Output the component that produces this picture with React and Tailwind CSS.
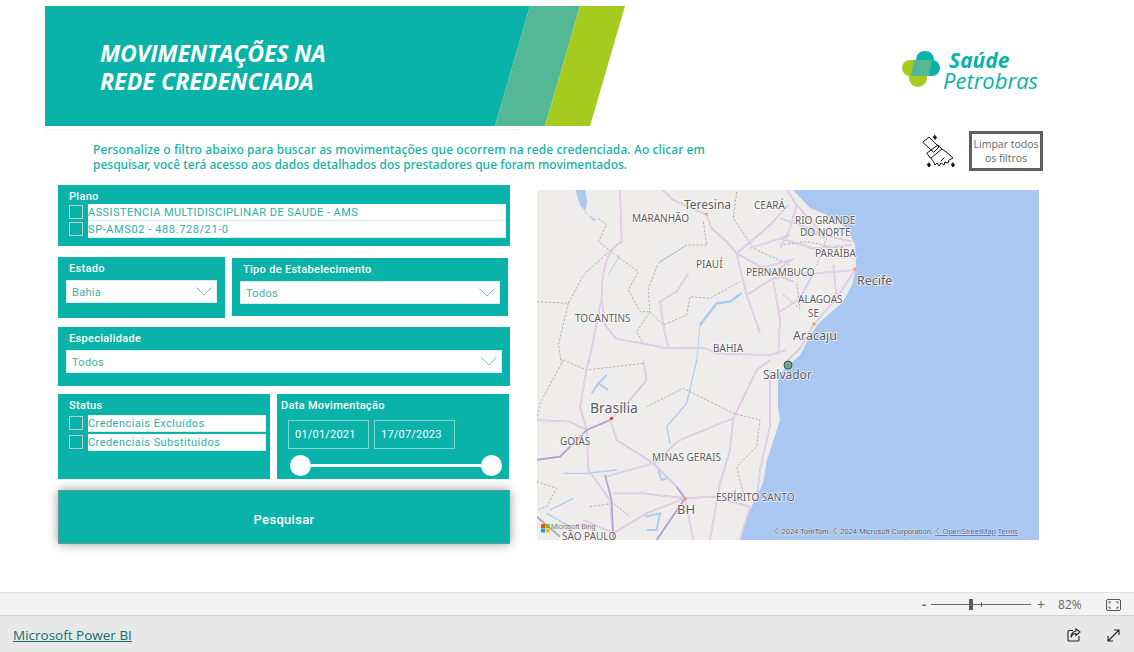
import React from "react";

const din = "font-['Roboto',sans-serif]";

const roads = {
  // coords read off 3x crops, each group keeps its own origin
  a: [
    "M270,12 L275,170 Q215,200 215,340 L225,420 L260,462 L340,475 L410,490 L520,488 L560,505 L720,510 L770,495",
    "M215,340 L175,540",
    "M395,12 L430,45 L530,90 L545,130 L590,170 L620,205 L650,330 L690,445",
    "M620,205 L720,120 L775,60",
    "M620,205 L700,250 L790,290",
    "M650,330 L730,280 L790,270",
    "M475,265 L440,320 L390,350 L400,420 L415,490",
    "M730,290 L750,400 L745,510",
    "M660,190 L780,150",
    "M690,250 L780,225",
  ],
  b: [
    "M20,180 L120,185 L170,210 L240,180 L260,240 L370,310 L440,380 L465,415 L490,540",
    "M175,0 L150,140 L170,210 L175,330 L240,420 L250,540",
    "M340,0 L350,60 L300,120 L240,180",
    "M20,300 L90,290 L170,210",
    "M230,350 L370,310 L450,240 L610,175 L680,30 L720,0",
    "M610,175 L600,270 L570,370 L540,540",
    "M250,400 L340,400 L465,415 L550,410 L660,440 L630,540",
    "M720,30 L720,200 L690,330 L680,420",
    "M465,415 L380,540",
    "M20,470 L90,530",
    "M160,480 L250,520 L350,460 L465,415",
  ],
  c: [
    "M20,15 L50,60 L30,130 L0,190",
    "M50,60 L130,150 L215,170",
    "M0,270 L110,265 L225,255",
    "M225,255 L170,340 L100,420 L60,490 L20,530",
    "M160,240 L170,340",
    "M40,220 L0,250",
    "M0,100 L60,120 L130,150",
    "M0,160 L100,190 L215,180",
    "M100,265 L60,340 L0,380",
  ],
};

const majors = [
  "M225,345 L245,420 L250,540",
  "M440,380 L465,415 L380,540",
  "M20,300 L90,290 L170,210 L240,180",
  "M20,470 L90,530",
];

const borders = {
  a: [
    "M20,350 L115,355 L160,270 L270,170",
    "M115,355 L85,480 L95,540",
    "M205,100 L230,120 L205,170 L270,220 L325,260 L295,315 L330,380 L360,380 L320,440 L340,475",
    "M530,180 L470,180 L385,235 L355,310 L360,380 L400,420 L470,390 L480,335 L540,340 L630,290",
    "M620,20 L610,100 L670,190 L780,240",
    "M520,110 L530,180",
  ],
  b: [
    "M100,0 L30,130 L20,180",
    "M100,0 L170,30 L340,10",
    "M350,140 L460,85 L610,160 L690,180 L680,260 L620,320 L640,400",
    "M20,365 L80,385 L50,440 L20,450",
    "M180,440 L250,430 L300,470",
  ],
  c: ["M0,180 L80,170 L180,190", "M10,330 L60,370 L50,290", "M60,130 L140,160 L110,240"],
};

function MapLabel({ x, y, size = 10, children, color = "#5f5a5e" }) {
  return (
    <text x={x} y={y} fontSize={size} fill={color} stroke="#ffffff" strokeWidth="1.5" strokeOpacity="0.8" paintOrder="stroke" fontFamily="'Noto Sans', sans-serif">
      {children}
    </text>
  );
}

function RoadSet({ list }) {
  return (
    <>
      {list.map((d) => (
        <path key={d} d={d} fill="none" stroke="#cdb9dc" strokeWidth="5" strokeLinejoin="round" />
      ))}
      {list.map((d) => (
        <path key={d + "i"} d={d} fill="none" stroke="#f1e9f3" strokeWidth="2" strokeLinejoin="round" />
      ))}
    </>
  );
}

function BorderSet({ list }) {
  return list.map((d) => <path key={d} d={d} fill="none" stroke="#a3a3a3" strokeWidth="2.5" strokeDasharray="7 5" />);
}

function MapView() {
  return (
    <svg viewBox="537 190 502 350" className="w-[502px] h-[350px] block bg-[#a9c7f1]">
      <path
        d="M537,190 L793,190 L810,208 L827,215 L847,228 L855,245 L856,268 L852,285 L843,302 L830,313 L817,325 L807,342 L800,355 L785,368 L778,377 L778,407 L780,420 L767,460 L763,483 L750,510 L743,527 L740,540 L537,540 Z"
        fill="#eeedeb"
      />
      <g transform="translate(530 185) scale(0.3333)">
        <path d="M135,12 L165,12 L172,50 L165,85 L200,105 L190,108 L150,60 Z" fill="#a9c9f0" />
        <path d="M270,210 L235,270 M510,420 L500,530 M470,180 L390,230" fill="none" stroke="#b5cfee" strokeWidth="3" />
        <path d="M635,325 L600,350 L560,355 L510,420" fill="none" stroke="#a9c9f0" strokeWidth="7" />
        <BorderSet list={borders.a} />
        <RoadSet list={roads.a} />
      </g>
      <g transform="translate(530 360) scale(0.3333)">
        <path d="M500,0 L470,130 L410,200 L420,250 M100,340 L170,340 L260,330 M60,450 L130,415 M50,460 L120,500" fill="none" stroke="#b0ccef" strokeWidth="4" />
        <path d="M185,100 L205,70 L230,45 M205,70 L235,90 M385,330 L395,360 L410,355 M345,470 L390,460 L380,510 L350,510" fill="none" stroke="#b0ccef" strokeWidth="6" />
        <BorderSet list={borders.b} />
        <RoadSet list={roads.b} />
        {majors.map((d) => (
          <path key={d} d={d} fill="none" stroke="#b7a1cd" strokeWidth="5" strokeLinejoin="round" />
        ))}
      </g>
      <g transform="translate(780 185) scale(0.3333)">
        <BorderSet list={borders.c} />
        <RoadSet list={roads.c} />
      </g>
      <circle cx="706.5" cy="214" r="1.5" fill="#f0a060" />
      <circle cx="855" cy="269" r="1.7" fill="#f0a060" />
      <circle cx="814" cy="324" r="1.7" fill="#f0a060" />
      <circle cx="611.5" cy="418.5" r="1.7" fill="#d8402c" />
      <circle cx="685.5" cy="499" r="1.7" fill="#f0a060" />
      <MapLabel x={684} y={209} size={12}>Teresina</MapLabel>
      <MapLabel x={754} y={209}>CEARÁ</MapLabel>
      <MapLabel x={632} y={222}>MARANHÃO</MapLabel>
      <MapLabel x={696} y={268}>PIAUÍ</MapLabel>
      <MapLabel x={746} y={276}>PERNAMBUCO</MapLabel>
      <MapLabel x={795} y={224}>RIO GRANDE</MapLabel>
      <MapLabel x={800} y={236}>DO NORTE</MapLabel>
      <MapLabel x={815} y={257}>PARAÍBA</MapLabel>
      <MapLabel x={857} y={285} size={12.5}>Recife</MapLabel>
      <MapLabel x={798} y={303}>ALAGOAS</MapLabel>
      <MapLabel x={808} y={317}>SE</MapLabel>
      <MapLabel x={793} y={340} size={12.5}>Aracaju</MapLabel>
      <MapLabel x={713} y={352}>BAHIA</MapLabel>
      <MapLabel x={575} y={322}>TOCANTINS</MapLabel>
      <MapLabel x={763} y={379} size={12}>Salvador</MapLabel>
      <MapLabel x={590} y={413} size={14}>Brasília</MapLabel>
      <MapLabel x={560} y={445}>GOIÁS</MapLabel>
      <MapLabel x={652} y={461}>MINAS GERAIS</MapLabel>
      <MapLabel x={716} y={501}>ESPÍRITO SANTO</MapLabel>
      <MapLabel x={677} y={514} size={13}>BH</MapLabel>
      <MapLabel x={562} y={540}>SÃO PAULO</MapLabel>
      <circle cx="788" cy="365" r="4" fill="#7aa583" stroke="#2f5f55" strokeWidth="1" />
      <rect x="541" y="524" width="4" height="4" fill="#f25022" />
      <rect x="545.5" y="524" width="4" height="4" fill="#7fba00" />
      <rect x="541" y="528.5" width="4" height="4" fill="#00a4ef" />
      <rect x="545.5" y="528.5" width="4" height="4" fill="#ffb900" />
      <text x="551" y="529" fontSize="7" fill="#777" fontFamily="'Liberation Sans', sans-serif">Microsoft Bing</text>
      <text x="774" y="534" fontSize="7.5" fill="#555" stroke="#ffffff" strokeWidth="1" strokeOpacity="0.5" paintOrder="stroke" fontFamily="'Liberation Sans', sans-serif">
        © 2024 TomTom, © 2024 Microsoft Corporation, <tspan fill="#4a5f9a" textDecoration="underline">© OpenStreetMap</tspan>{"  "}<tspan fill="#4a5f9a" textDecoration="underline">Terms</tspan>
      </text>
    </svg>
  );
}

function Chevron() {
  return (
    <svg width="16" height="9" viewBox="0 0 16 9" className="shrink-0">
      <path d="M0.5,0.5 L8,8 L15.5,0.5" fill="none" stroke="#74c9c3" strokeWidth="1" />
    </svg>
  );
}

function Dropdown({ value }) {
  return (
    <div className="h-[23px] bg-white flex items-center justify-between pl-[5px] pr-[4px] text-[11px] tracking-[0.3px] text-[#3fb0a6] border border-[#d8efed]">
      <span className="pt-[3px]">{value}</span>
      <Chevron />
    </div>
  );
}

function CheckRow({ label, spacing = "tracking-[0.45px]" }) {
  return (
    <div className="flex items-start">
      <span className="w-[14px] h-[14px] mt-px border border-[#b9cfcd] shrink-0 mr-[5px]" />
      <span className={`flex-1 bg-white text-[11px] text-[#2bb0a6] h-[17px] leading-[18px] border-b border-[#d5eeec] ${spacing}`}>{label}</span>
    </div>
  );
}

function PanelTitle({ children, className = "" }) {
  return <div className={`text-[11px] font-medium tracking-[0.3px] text-white leading-[13px] ${className}`}>{children}</div>;
}

function BroomIcon() {
  return (
    <svg width="34" height="33" viewBox="0 0 34 33" fill="none" stroke="#111" strokeWidth="1" strokeLinejoin="round" strokeLinecap="round">
      <path d="M1,7 L7,2 L17,12 L12,17 Z" />
      <path d="M5,18 L16,10 L20,14 L9,23 Z" />
      <path d="M9,23 Q12,27 13,30 L15,28 L17,31 L19,28 L22,30 L23,27 L26,28 L27,25 L31,23 Q25,17 20,14" />
      <path d="M19,26 L22,23" />
      <path d="M13,0.5 L14.5,2.5 L13,4.5 L11.5,2.5 Z" fill="#111" />
      <path d="M7,28 L8.5,30 L7,32 L5.5,30 Z" fill="#111" />
      <path d="M31,28 L32.5,30 L31,32 L29.5,30 Z" fill="#111" />
    </svg>
  );
}

function Logo() {
  return (
    <div className="flex items-start mt-[44px] ml-[277px]">
      <svg width="40" height="36" viewBox="0 0 40 36" className="mt-[1px]">
        <rect x="0" y="9" width="28" height="16" rx="8" fill="#a6cb1f" />
        <rect x="7" y="12" width="18" height="24" rx="9" fill="#a6cb1f" />
        <rect x="14" y="0" width="18" height="25" rx="8.5" fill="#0ab3a9" />
        <rect x="15" y="9" width="23" height="16" rx="8" fill="#0ab3a9" />
        <path d="M12,9 L30,9 L27,25 L9,25 Z" fill="#54b795" />
      </svg>
      <div className="ml-[1px] text-[#0ab3a9] font-['Open_Sans',sans-serif] italic">
        <div className="text-[21px] font-bold leading-[20px] ml-[6px]">Saúde</div>
        <div className="text-[22px] leading-[23px] -mt-[1px]">Petrobras</div>
      </div>
    </div>
  );
}

export default function App() {
  return (
    <div className={`h-[652px] w-[1134px] overflow-hidden flex flex-col bg-white ${din}`}>
      <main className="h-[592px] shrink-0">
        <div className="flex pt-[6px] pl-[45px]">
          <div className="relative w-[580px] h-[120px] shrink-0">
            <svg viewBox="0 0 580 120" className="absolute inset-0 w-full h-full">
              <polygon points="0,0 485,0 450,120 0,120" fill="#0ab3a9" />
              <polygon points="485,0 535,0 500,120 450,120" fill="#54b795" />
              <polygon points="535,0 580,0 545,120 500,120" fill="#a6cb1f" />
            </svg>
            <h1 className="relative pl-[55px] pt-[33px] text-white text-[23px] leading-[28px] font-['Open_Sans',sans-serif] font-bold italic tracking-[-0.15px]">
              MOVIMENTAÇÕES NA
              <br />
              <span className="tracking-[0.1px]">REDE CREDENCIADA</span>
            </h1>
          </div>
          <Logo />
        </div>
        <div className="h-px w-[475px] ml-[45px] mt-[3px] bg-[#e6f6f4]" />
        <div className="flex h-[55px] pl-[93px]">
          <p className="w-[640px] pt-[12px] text-[#10b3a8] text-[12px] leading-[15px] font-['Noto_Sans',sans-serif] font-medium tracking-[0.1px] whitespace-nowrap">
            Personalize o filtro abaixo para buscar as movimentações que ocorrem na rede credenciada. Ao clicar em
            <br />
            <span className="tracking-[0px]">pesquisar, você terá acesso aos dados detalhados dos prestadores que foram movimentados.</span>
          </p>
          <div className="ml-[189px] mt-[5px]">
            <BroomIcon />
          </div>
          <button className="ml-[13px] mt-[1px] w-[74px] h-[40px] border-[3px] border-[#5f5f5f] text-[10.5px] leading-[14px] text-[#666] font-['Open_Sans',sans-serif] text-center whitespace-nowrap">
            Limpar todos
            <br />
            os filtros
          </button>
        </div>

        <div className="flex pl-[58px]">
          <section className="w-[452px] shrink-0">
            <div className="h-[61px] bg-[#0ab3a9] pl-[11px] pr-[4px] pt-[5px]">
              <PanelTitle>Plano</PanelTitle>
              <div className="mt-[1px] flex flex-col">
                <CheckRow label="ASSISTENCIA MULTIDISCIPLINAR DE SAUDE - AMS" />
                <CheckRow label="SP-AMS02 - 488.728/21-0" spacing="tracking-[0.6px]" />
              </div>
            </div>

            <div className="flex mt-[11px] gap-[7px]">
              <div className="w-[167px] h-[61px] bg-[#0ab3a9] px-[8px] pt-[5px]">
                <PanelTitle className="ml-[3px] mb-[5px]">Estado</PanelTitle>
                <Dropdown value="Bahia" />
              </div>
              <div className="w-[276px] h-[58px] mt-[1px] bg-[#0ab3a9] px-[8px] pt-[5px]">
                <PanelTitle className="ml-[3px] mb-[5px]">Tipo de Estabelecimento</PanelTitle>
                <Dropdown value="Todos" />
              </div>
            </div>

            <div className="h-[59px] mt-[9px] bg-[#0ab3a9] pl-[8px] pr-[8px] pt-[5px]">
              <PanelTitle className="ml-[3px] mb-[5px]">Especialidade</PanelTitle>
              <Dropdown value="Todos" />
            </div>

            <div className="flex mt-[8px] gap-[7px]">
              <div className="w-[212px] h-[85px] bg-[#0ab3a9] pl-[11px] pr-[4px] pt-[5px]">
                <PanelTitle>Status</PanelTitle>
                <div className="mt-[3px] flex flex-col gap-[2px]">
                  <CheckRow label="Credenciais Excluídos" />
                  <CheckRow label="Credenciais Substituídos" />
                </div>
              </div>
              <div className="w-[232px] h-[85px] bg-[#0ab3a9] pt-[5px]">
                <PanelTitle className="ml-[4px]">Data Movimentação</PanelTitle>
                <div className="flex gap-[5px] ml-[11px] mt-[8px]">
                  <div className="w-[81px] h-[29px] border border-[#7fd6d0] text-white text-[11px] tracking-[0.2px] flex items-center pl-[6px] pt-[2px]">01/01/2021</div>
                  <div className="w-[81px] h-[29px] border border-[#7fd6d0] text-white text-[11px] tracking-[0.2px] flex items-center pl-[6px] pt-[2px]">17/07/2023</div>
                </div>
                <div className="flex items-center ml-[13px] mr-[7px] mt-[6px]">
                  <span className="w-[21px] h-[21px] rounded-full bg-white shrink-0" />
                  <span className="flex-1 h-[3px] bg-white" />
                  <span className="w-[21px] h-[21px] rounded-full bg-white shrink-0" />
                </div>
              </div>
            </div>

            <button className="block w-[452px] h-[54px] mt-[11px] pt-[5px] bg-[#0ab3a9] text-white text-[13px] font-medium tracking-[0.3px] border border-[#5f9a96] shadow-[0_0_10px_rgba(0,0,0,0.4)]">
              Pesquisar
            </button>
          </section>

          <div className="ml-[27px] mt-[5px]">
            <MapView />
          </div>
        </div>
      </main>

      <div className="h-[24px] shrink-0 bg-[#f3f3f3] border-y border-[#d2d2d2] border-t-[#e2e2e2] flex items-center font-['Open_Sans',sans-serif] text-[#666] pt-px">
        <span className="ml-[922px] w-[6px] text-[13px] font-bold leading-none">-</span>
        <div className="relative w-[100px] h-px bg-[#666] ml-[3px]">
          <span className="absolute left-[38px] -top-[5px] w-[4px] h-[11px] bg-[#5a5a5a]" />
          <span className="absolute left-[50px] -top-[2px] w-px h-[5px] bg-[#666]" />
        </div>
        <span className="ml-[6px] text-[14px] leading-none">+</span>
        <span className="ml-[13px] text-[12px]">82%</span>
        <svg width="15" height="12" viewBox="0 0 15 12" className="ml-[24px]" fill="none" stroke="#555" strokeWidth="1">
          <rect x="0.5" y="0.5" width="14" height="11" rx="1.5" />
          <path d="M3,4.5 V3 H5 M10,3 H12 V4.5 M3,7.5 V9 H5 M10,9 H12 V7.5" />
        </svg>
      </div>

      <footer className="flex-1 bg-[#e8e8e8] flex items-center pt-[2px] font-['Open_Sans',sans-serif]">
        <a href="#" className="ml-[13px] text-[13.5px] text-[#0f6f6b] underline">Microsoft Power BI</a>
        <svg width="14" height="14" viewBox="0 0 14 14" className="ml-auto" fill="none" stroke="#222" strokeWidth="1.1">
          <path d="M6,2.5 H2 Q1,2.5 1,3.5 V12 Q1,13 2,13 H11 Q12,13 12,12 V8" />
          <path d="M4,9.5 Q5,5.5 9,5.5 V7.5 L13,4 L9,0.8 V3 Q4.5,3.5 4,9.5 Z" />
        </svg>
        <svg width="13" height="13" viewBox="0 0 13 13" className="ml-[26px] mr-[14px]" fill="none" stroke="#222" strokeWidth="1.1">
          <path d="M1,12 L12,1 M7,1 H12 V6 M1,7 V12 H6" />
        </svg>
      </footer>
    </div>
  );
}
